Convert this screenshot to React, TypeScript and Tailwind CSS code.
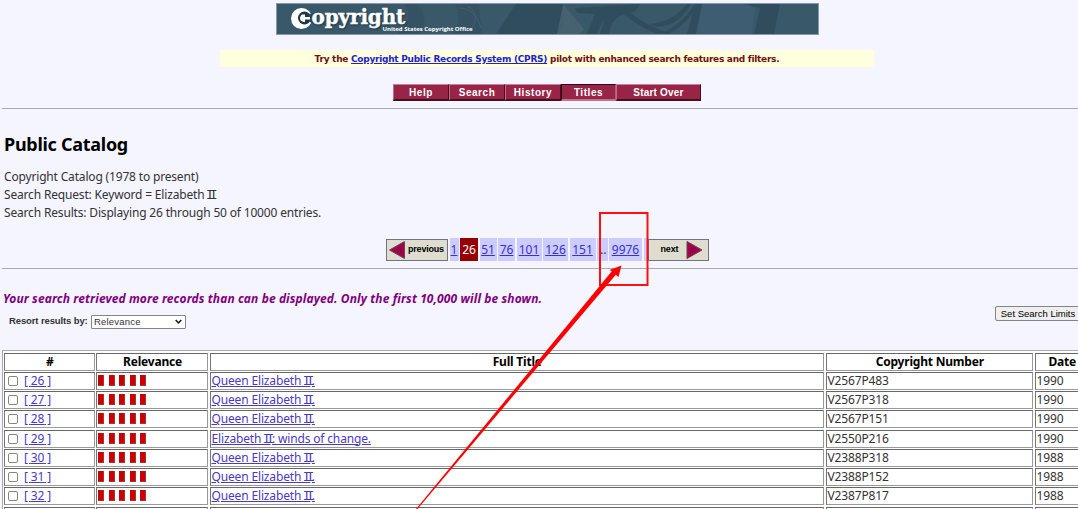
import { clsx } from "clsx";

const NAV_ITEMS = [
  { label: "Help", width: "w-[56px]", active: false },
  { label: "Search", width: "w-[56px]", active: false },
  { label: "History", width: "w-[56px]", active: false },
  { label: "Titles", width: "w-[55px]", active: true },
  { label: "Start Over", width: "w-[85px] tracking-[0.2px]", active: false },
];

const PAGES = [
  { label: "1", width: "w-[9px]" },
  { label: "26", width: "w-[18px]", current: true },
  { label: "51", width: "w-[17px]" },
  { label: "76", width: "w-[17px]" },
  { label: "101", width: "w-[25px]" },
  { label: "126", width: "w-[25px]" },
  { label: "151", width: "w-[26px]" },
  { label: "..", width: "w-[10.5px]", plain: true },
  { label: "9976", width: "w-[33px]" },
];

const RECORDS = [
  { id: 26, before: "Queen Elizabeth ", after: ".", number: "V2567P483", date: "1990" },
  { id: 27, before: "Queen Elizabeth ", after: ".", number: "V2567P318", date: "1990" },
  { id: 28, before: "Queen Elizabeth ", after: ".", number: "V2567P151", date: "1990" },
  { id: 29, before: "Elizabeth ", after: ": winds of change.", number: "V2550P216", date: "1990" },
  { id: 30, before: "Queen Elizabeth ", after: ".", number: "V2388P318", date: "1988" },
  { id: 31, before: "Queen Elizabeth ", after: ".", number: "V2388P152", date: "1988" },
  { id: 32, before: "Queen Elizabeth ", after: ".", number: "V2387P817", date: "1988" },
];

const ROW = "grid h-[19.25px] grid-cols-[90.5px_112px_614.5px_207.5px_70px] gap-x-[1.5px]";
const CELL =
  "flex h-[18px] items-center overflow-hidden whitespace-nowrap border border-b-[#999] border-l-[#777] border-r-[#999] border-t-[#666] bg-white";

function Numeral() {
  return (
    <span className="ml-[-1.5px] mr-[1.5px] font-['Liberation_Mono'] text-[13px] leading-[0] tracking-[-4px]">II</span>
  );
}

function Banner() {
  return (
    <div className="relative ml-[16px] h-[32px] w-[543px] overflow-hidden border border-[#8798a8] bg-[#395869]">
      <svg className="absolute inset-0" width="541" height="30" viewBox="0 0 541 30">
        <g fill="#2c4857" opacity="0.65">
          <path d="M128 0h12c8 8 10 18 3 30h-24c13-8 15-20 9-30z" opacity=".5" />
          <path d="M178 0h25c-4 10 5 20 1 30h-29c9-10 8-20 3-30z" opacity=".5" />
          <path d="M239 0h47v24l-7 6h-60z" />
          <path d="M298 4l65-4-5 8c-18 1-24 10-26 22h-9l5-16-9 16h-9l8-20-18-1z" />
          <path d="M352 7c12 11 24 16 37 21l-8 2c-12-4-24-12-35-20z" />
          <path d="M373 20c18-2 29-10 37-20h4c-8 13-16 22-35 23z" />
          <path d="M384 30c14-7 25-16 34-30h3c-8 15-17 23-29 30z" />
          <path d="M418 0h7l-6 30h-9z" />
          <path d="M465 0l18 4-6 26h20l6-30z" />
        </g>
        <path d="M286 0l21 25-5 5h-22z" fill="#4b6675" opacity=".7" />
        <path d="M182 4c12 0 18 8 22 20M190 2c10 5 10 12 5 22" stroke="#4d6978" fill="none" opacity=".6" />
        <path d="M425 0h45l8 4-3 26h-56z" fill="#43617b" opacity=".5" />
      </svg>
      <svg className="absolute left-[13px] top-[3px]" width="25" height="23" viewBox="0 0 25 23">
        <circle cx="11.5" cy="11.5" r="10.5" fill="#fff" />
        <circle cx="14.5" cy="11" r="6.5" fill="#1f3846" />
        <path d="M19 7.5l6-2v12l-6-3z" fill="#2b4655" />
        <path d="M12 7.5h3V10h5v2.5h-5V15c-3 0-5-1.5-5-3.500s1-3.200 2-4z" fill="#fff" />
      </svg>
      <span className="absolute left-[35px] top-[2px] font-['DejaVu_Serif'] text-[20px] font-bold leading-[22px] tracking-[-0.15px] text-white [-webkit-text-stroke:0.4px_white] [text-shadow:1px_1px_2px_#142c38]">
        opyright
      </span>
      <span className="absolute left-[106px] top-[22px] whitespace-nowrap font-['Open_Sans'] text-[6px] font-bold leading-[7px] tracking-[-0.02px] text-white">
        United States Copyright Office
      </span>
    </div>
  );
}

function NavBar() {
  return (
    <nav className="flex h-[17px] w-[308px] font-['Liberation_Sans'] text-[10px] font-bold tracking-[0.55px] text-white">
      {NAV_ITEMS.map((item) => (
        <a
          key={item.label}
          className={clsx(
            "flex items-center justify-center border border-b-2 bg-[#982447]",
            item.width,
            item.active
              ? "border-b-[#c0738b] border-l-[#350414] border-r-[#b65b76] border-t-[#350414]"
              : "border-b-[#4b0d20] border-l-[#bd6d84] border-r-[#4b0d20] border-t-[#c88296]",
          )}
        >
          {item.label}
        </a>
      ))}
    </nav>
  );
}

function Pager() {
  return (
    <div className="flex h-[23px] items-center text-[12px]">
      <div className="flex h-[22px] w-[62px] items-center border border-[#73737b] bg-[#deddd0]">
        <svg width="19" height="20" viewBox="0 0 19 20">
          <path d="M2.5 10L17.5 1.5v17z" fill="#a3004f" stroke="#6b4450" />
          <path d="M8 10L15 6v8z" fill="#930043" />
        </svg>
        <span className="ml-[2px] font-['Liberation_Sans'] text-[9px] font-bold tracking-[-0.2px] text-black">
          previous
        </span>
      </div>
      <div className="ml-[1.5px] flex gap-[1.5px]">
        {PAGES.map((page) => (
          <span
            key={page.label}
            className={clsx(
              "flex h-[23px] items-center justify-center",
              page.width,
              page.current ? "bg-[#960000] text-white" : "bg-[#ccccff]",
              !page.current && !page.plain && "text-[#3a30d0] underline",
              page.plain && "pl-[2px]",
            )}
          >
            {page.label}
          </span>
        ))}
      </div>
      <div className="ml-[2px] h-[23px] w-[3.5px] bg-[#ccccff]" />
      <div className="flex h-[22px] w-[61px] items-center justify-end border border-[#73737b] bg-[#deddd0]">
        <span className="mr-[6px] font-['Liberation_Sans'] text-[9px] font-bold tracking-[-0.1px] text-black">
          next
        </span>
        <svg className="mr-[4px]" width="19" height="20" viewBox="0 0 19 20">
          <path d="M2 1.5v17L17 10z" fill="#a3004f" stroke="#6b4450" />
          <path d="M5 6v8l7-4z" fill="#930043" />
        </svg>
      </div>
    </div>
  );
}

function ResultsTable() {
  return (
    <div className="ml-[2px] mt-[21px] h-[170px] w-[1110px] border-l border-t border-[#aaa] bg-white pl-px pt-[1.5px]">
      <div className={clsx(ROW, "text-[12px] font-bold tracking-[-0.2px] text-black")}>
        {["#", "Relevance", "Full Title", "Copyright Number", "Date"].map((heading) => (
          <div
            key={heading}
            className={clsx(CELL, "pt-px", heading === "Date" ? "pl-[13px]" : "justify-center pl-px")}
          >
            {heading}
          </div>
        ))}
      </div>
      {RECORDS.map((record) => (
        <div key={record.id} className={clsx(ROW, "tracking-[-0.15px]")}>
          <div className={clsx(CELL, "pl-[3px]")}>
            <span className="h-[10px] w-[10px] rounded-[2px] border border-[#858585] bg-white" />
            <a className="ml-[6px] whitespace-pre text-[#4a39c4] underline">[ {record.id} ]</a>
          </div>
          <div className={clsx(CELL, "items-start gap-[4.5px] pl-px pt-[2px]")}>
            {[0, 1, 2, 3, 4].map((bar) => (
              <span key={bar} className="h-[11px] w-[6px] border-b border-r border-[#a33] bg-[#cc0000]" />
            ))}
          </div>
          <div className={clsx(CELL, "pl-px")}>
            <a className="whitespace-pre text-[#4a39c4] underline">
              {record.before}
              <Numeral />
              {record.after}
            </a>
          </div>
          <div className={clsx(CELL, "pl-px")}>{record.number}</div>
          <div className={clsx(CELL, "pl-px")}>{record.date}</div>
        </div>
      ))}
      <div className={ROW}>
        {[0, 1, 2, 3, 4].map((cell) => (
          <div key={cell} className={CELL} />
        ))}
      </div>
    </div>
  );
}

export default function App() {
  return (
    <div className="relative h-[509px] w-[1078px] overflow-hidden bg-[#f5f5ff] font-['Noto_Sans',sans-serif] text-[12px] text-[#333]">
      <header className="flex flex-col items-center pt-[3px]">
        <Banner />
        <div className="ml-[16px] mt-[15px] flex h-[17px] w-[654px] items-center justify-center bg-[#ffffdd] font-['DejaVu_Sans'] text-[9px] font-bold tracking-[-0.27px] text-[#701010]">
          <p className="mt-[2px] whitespace-nowrap">
            Try the <a className="text-[#2222cc] underline">Copyright Public Records System (CPRS)</a> pilot with
            enhanced search features and filters.
          </p>
        </div>
        <div className="ml-[16px] mt-[17px]">
          <NavBar />
        </div>
      </header>

      <hr className="ml-[2px] mt-[7px] border-[#aaa]" />

      <section className="ml-[4px] mt-[23px]">
        <h1 className="text-[18px] font-bold leading-[24px] tracking-[-0.28px] text-black">Public Catalog</h1>
        <div className="mt-[12px] leading-[18px] tracking-[-0.17px]">
          <p>Copyright Catalog (1978 to present)</p>
          <p>
            Search Request: Keyword = Elizabeth <Numeral />
          </p>
          <p>Search Results: Displaying 26 through 50 of 10000 entries.</p>
        </div>
      </section>

      <div className="ml-[386px] mt-[16px]">
        <Pager />
      </div>
      <hr className="ml-[2px] mt-[7px] border-[#aaa]" />

      <p className="ml-[3px] mt-[21px] text-[12px] font-bold italic leading-[17px] tracking-[0.1px] text-[#800080]">
        Your search retrieved more records than can be displayed. Only the first 10,000 will be shown.
      </p>

      <div className="flex h-[22px] items-end font-['Liberation_Sans'] text-[9.5px]">
        <span className="mb-[1px] ml-[9px] w-[82px] whitespace-nowrap font-bold tracking-[-0.12px]">
          Resort results by:
        </span>
        <div className="flex h-[14px] w-[95px] items-center justify-between rounded-[1px] border border-[#858585] bg-white pl-[2px] pr-[3px] tracking-[0.2px]">
          Relevance
          <svg width="7" height="6" viewBox="0 0 7 6">
            <path d="M.7 1l2.8 3L6.3 1" fill="none" stroke="#111" strokeWidth="1.5" />
          </svg>
        </div>
        <button className="mb-[8px] ml-auto mr-[-3px] h-[15px] w-[86px] whitespace-nowrap rounded-[2px] border border-[#858585] bg-[#efefef] text-[9.5px] leading-[13px] text-black">
          Set Search Limits
        </button>
      </div>

      <ResultsTable />

      <svg className="pointer-events-none absolute inset-0" width="1078" height="509" viewBox="0 0 1078 509">
        <rect x="600" y="213" width="47.5" height="72" fill="none" stroke="#ff1010" strokeWidth="2" />
        <path d="M621.5 265.5L618.5 277L615.8 274.8L417.5 509H416L611.8 271.2L609.5 270z" fill="#f00" />
      </svg>
    </div>
  );
}
